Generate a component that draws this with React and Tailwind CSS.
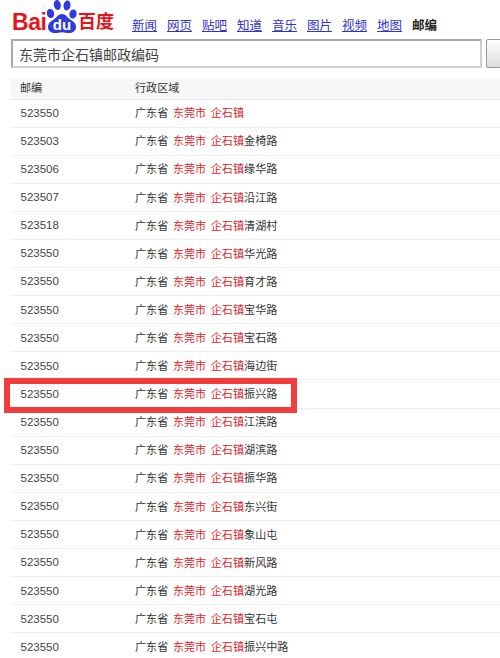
// Baidu postcode search result page
const CJK = { fontFamily: '"Liberation Sans", "Noto Sans CJK SC", sans-serif' };

const NAV_LINKS = ['新闻', '网页', '贴吧', '知道', '音乐', '图片', '视频', '地图'];

const ROWS = [
    ['523550', ''],
    ['523503', '金椅路'],
    ['523506', '缘华路'],
    ['523507', '沿江路'],
    ['523518', '清湖村'],
    ['523550', '华光路'],
    ['523550', '育才路'],
    ['523550', '宝华路'],
    ['523550', '宝石路'],
    ['523550', '海边街'],
    ['523550', '振兴路'],
    ['523550', '江滨路'],
    ['523550', '湖滨路'],
    ['523550', '振华路'],
    ['523550', '东兴街'],
    ['523550', '象山屯'],
    ['523550', '新风路'],
    ['523550', '湖光路'],
    ['523550', '宝石屯'],
    ['523550', '振兴中路'],
];

function Logo() {
    return (
        <div className="flex items-end w-[104px] h-[33px] shrink-0 text-[#e5161b]">
            <span className="text-[23px] leading-[22px] font-bold -tracking-[0.4px] w-[35px] pl-[1px] whitespace-nowrap">Bai</span>
            <svg width="32" height="33" viewBox="0 0 32 33" className="shrink-0">
                <g fill="#2f3bdf">
                    <ellipse cx="4.500" cy="13.500" rx="3.600" ry="4.600" transform="rotate(-12 4.500 13.500)" />
                    <ellipse cx="11.300" cy="5" rx="3.500" ry="5" transform="rotate(-8 11.300 5)" />
                    <ellipse cx="21" cy="5.500" rx="3.500" ry="5" transform="rotate(8 21 5.500)" />
                    <ellipse cx="27" cy="14" rx="3.600" ry="4.600" transform="rotate(12 27 14)" />
                    <path d="M16 14c3.500 0 5 3 7.500 5 3 2.200 6.500 3.500 6.500 8 0 4-3.500 6-7 6-2.500 0-4.500-.8-7-.8s-4.500.8-7 .8c-3.500 0-7-2-7-6 0-4.500 3.500-5.800 6.500-8 2.500-2 4-5 7.500-5z" />
                </g>
                <text x="16" y="30" textAnchor="middle" fill="#fff" fontSize="15" fontWeight="700" fontFamily="Liberation Sans">du</text>
            </svg>
            <span className="text-[18px] leading-[22px] font-bold whitespace-nowrap" style={CJK}>百度</span>
        </div>
    );
}

function Row({ code, road }) {
    return (
        <div className="flex items-center h-[28.1px] border-b border-[#eeeeee] pl-[9px] pt-[1px] text-[11.100px] text-[#333333]">
            <span className="w-[115px] pl-[0.5px] text-[11.500px] text-[#444444]">{code}</span>
            <span className="whitespace-nowrap [word-spacing:1.5px]">
                广东省 <span className="text-[#e0252b]">东莞市 企石镇</span>{road}
            </span>
        </div>
    );
}

export default function App() {
    return (
        <div className="relative w-[500px] h-[658px] overflow-hidden bg-white" style={CJK}>
            {/* Top nav */}
            <div className="flex items-end h-[33px] pl-[11px]">
                <Logo />
                <div className="flex gap-[10px] ml-[17px] mb-[-1px] text-[12.500px] leading-[16px]">
                    {NAV_LINKS.map((link) => (
                        <a key={link} className="text-[#3333cc] underline w-[25px] whitespace-nowrap">{link}</a>
                    ))}
                    <span className="text-[#222222] font-bold whitespace-nowrap">邮编</span>
                </div>
            </div>

            {/* Search box */}
            <div className="flex gap-[4px] mt-[6px] pl-[11px] w-[530px]">
                <div className="w-[471px] h-[29px] border-2 border-t-[#a8a8a8] border-l-[#a8a8a8] border-r-[#cfcfcf] border-b-[#cfcfcf] flex items-center pl-[6px] pt-[3px] text-[14px] text-[#444444]">
                    东莞市企石镇邮政编码
                </div>
                <div className="w-[40px] h-[29px] border border-[#999999] rounded-[2px] bg-gradient-to-b from-white to-[#dddddd]" />
            </div>

            {/* Table */}
            <div className="mt-[10px] ml-[11px]">
                <div className="flex items-center h-[21.500px] bg-[#f7f7f7] border-b border-[#e8e8e8] pl-[9px] pt-[1px] text-[11.100px] text-[#333333]">
                    <span className="w-[115px]">邮编</span>
                    <span>行政区域</span>
                </div>
                {ROWS.map((row, i) => (
                    <Row key={i} code={row[0]} road={row[1]} />
                ))}
            </div>

            {/* Red highlight annotation */}
            <div className="absolute left-[4px] top-[378px] w-[293px] h-[35px] border-[6px] border-[#f53c3c]" />
        </div>
    );
}
